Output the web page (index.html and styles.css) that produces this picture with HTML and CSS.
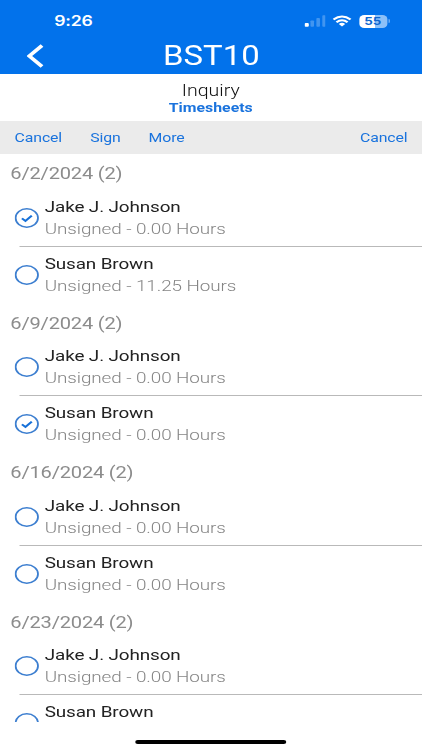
FILE: index.html
```html
<!DOCTYPE html>
<html lang="en">
<head>
<meta charset="utf-8">
<title>BST10</title>
<link rel="stylesheet" href="styles.css">
</head>
<body>
<svg class="defs" width="0" height="0">
  <symbol id="off" viewBox="0 0 20 20"><circle cx="10" cy="10" r="9.2" fill="none" stroke="#3d7fd0" stroke-width="1.5"/></symbol>
  <symbol id="on" viewBox="0 0 20 20"><circle cx="10" cy="10" r="9.2" fill="none" stroke="#3d7fd0" stroke-width="1.5"/><path d="M6 10.4 8.9 13 14.1 7.6" fill="none" stroke="#1670d8" stroke-width="1.9"/></symbol>
</svg>
<div class="screen">
  <header class="top">
    <div class="status">
      <span class="time">9:26</span>
      <svg class="signal" viewBox="0 0 18 12"><rect x="0" y="8" width="3.6" height="4" rx="1" fill="#fff"/><g fill="#fff" opacity=".25"><rect x="5" y="5.5" width="3" height="6.5" rx=".8"/><rect x="10" y="3" width="3" height="9" rx=".8"/><rect x="15" y="0" width="3" height="12" rx=".8"/></g></svg>
      <svg class="wifi" viewBox="0 0 17 12" fill="none" stroke="#fff" stroke-width="2.3"><path d="M.8 4.3Q8.500-2.200 16.200 4.300M3.500 7.300Q8.500 3 13.500 7.300"/><path d="M5.600 9.200Q8.500 6.800 11.400 9.200L8.500 12Z" fill="#fff" stroke="none"/></svg>
      <span class="battery"><span class="level">55</span></span><span class="tip"></span>
    </div>
    <div class="nav">
      <svg class="back" viewBox="0 0 14 24"><path d="M12.500 1.500 2 12 12.500 22.500" fill="none" stroke="#fff" stroke-width="3.200"/></svg>
      <h1>BST10</h1>
    </div>
  </header>
  <div class="subtitle"><div class="kind">Inquiry</div><div class="section">Timesheets</div></div>
  <div class="toolbar"><a>Cancel</a><a>Sign</a><a>More</a><a class="last">Cancel</a></div>
  <main class="list">
    <section><h2>6/2/2024 (2)</h2>
      <div class="row"><svg class="check"><use href="#on"/></svg><div class="body"><div class="name">Jake J. Johnson</div><div class="info">Unsigned - 0.00 Hours</div></div></div>
      <div class="row"><svg class="check"><use href="#off"/></svg><div class="body"><div class="name">Susan Brown</div><div class="info">Unsigned - 11.25 Hours</div></div></div>
    </section>
    <section><h2>6/9/2024 (2)</h2>
      <div class="row"><svg class="check"><use href="#off"/></svg><div class="body"><div class="name">Jake J. Johnson</div><div class="info">Unsigned - 0.00 Hours</div></div></div>
      <div class="row"><svg class="check"><use href="#on"/></svg><div class="body"><div class="name">Susan Brown</div><div class="info">Unsigned - 0.00 Hours</div></div></div>
    </section>
    <section><h2>6/16/2024 (2)</h2>
      <div class="row"><svg class="check"><use href="#off"/></svg><div class="body"><div class="name">Jake J. Johnson</div><div class="info">Unsigned - 0.00 Hours</div></div></div>
      <div class="row"><svg class="check"><use href="#off"/></svg><div class="body"><div class="name">Susan Brown</div><div class="info">Unsigned - 0.00 Hours</div></div></div>
    </section>
    <section><h2>6/23/2024 (2)</h2>
      <div class="row"><svg class="check"><use href="#off"/></svg><div class="body"><div class="name">Jake J. Johnson</div><div class="info">Unsigned - 0.00 Hours</div></div></div>
      <div class="row"><svg class="check"><use href="#off"/></svg><div class="body"><div class="name">Susan Brown</div></div></div>
    </section>
  </main>
  <div class="home"><span></span></div>
</div>
</body>
</html>
```
FILE: styles.css
```css
* { box-sizing: border-box; margin: 0; }
html, body { width: 422px; height: 750px; overflow: hidden; background: #fff; }
body { font-family: Roboto, "Liberation Sans", sans-serif; }
svg { display: block; flex: none; }
.defs { position: absolute; }
/* The display is stretched horizontally: 347px * 1.2182 covers the 422px window */
.screen {
  width: 347px; height: 750px;
  display: flex; flex-direction: column;
  transform: scaleX(1.2182); transform-origin: 0 0;
}
.top { height: 74px; background: #0272eb; color: #fff; flex: none; }
.status { height: 38px; padding: 4px 0 0 44.500px; display: flex; align-items: center; }
.time { width: 205px; font: 600 14.500px/18px Inter, sans-serif; letter-spacing: -.2px; }
.signal { width: 17.500px; height: 12px; }
.wifi { width: 15.500px; height: 12px; margin-left: 6px; }
.battery {
  width: 23px; height: 13px; margin-left: 6px; border-radius: 4px;
  background: linear-gradient(90deg, #fff 55%, #8cc0f8 55%);
  display: flex; justify-content: center; align-items: center;
}
.level { font: 700 11px/13px Inter, sans-serif; color: #0d66cf; }
.tip { width: 1.500px; height: 4px; margin-left: 1px; background: #80b8f5; border-radius: 0 2px 2px 0; }
.nav { height: 36px; display: grid; grid-template-columns: 60px 1fr 60px; align-items: center; }
.back { width: 14px; height: 24px; margin-left: 21.500px; }
h1 { font-size: 27px; line-height: 34px; font-weight: 400; text-align: center; }
.subtitle { height: 47px; padding: 7px 1px 0 0; text-align: center; flex: none; }
.kind { font-size: 16px; line-height: 19px; font-weight: 300; color: #111; }
.section { font-size: 13px; line-height: 15px; font-weight: 700; color: #1a73dd; }
.toolbar {
  height: 33px; padding: 0 12.500px 0 12px; background: #ebebeb; flex: none;
  display: flex; align-items: center; gap: 23px;
  font-size: 13px; line-height: 31px; letter-spacing: -.1px; color: #1a73dd;
}
.last { margin-left: auto; }
.list { height: 568px; overflow: hidden; flex: none; }
section { height: 149.500px; }
h2 { height: 35.500px; padding-left: 8.500px; font-size: 16.500px; line-height: 39.500px; letter-spacing: -.18px; font-weight: 400; color: #8c8c8c; }
.row { height: 57px; padding-left: 12.200px; display: flex; }
.check { width: 20px; height: 20px; margin-top: 18.200px; }
.body { padding: 7.400px 0 0 4.500px; }
.name { font-size: 15.500px; line-height: 20px; letter-spacing: -.1px; color: #222; }
.info { font-size: 15.500px; line-height: 24px; letter-spacing: -.08px; font-weight: 300; color: #858585; }
h2 + .row { background: linear-gradient(#b9b9b9, #b9b9b9) 16.200px 100% / 331px 1px no-repeat; }
.home { padding-top: 17.500px; display: flex; justify-content: center; }
.home span { width: 124px; height: 4px; margin-right: 1px; border-radius: 2px; background: #000; }
```
